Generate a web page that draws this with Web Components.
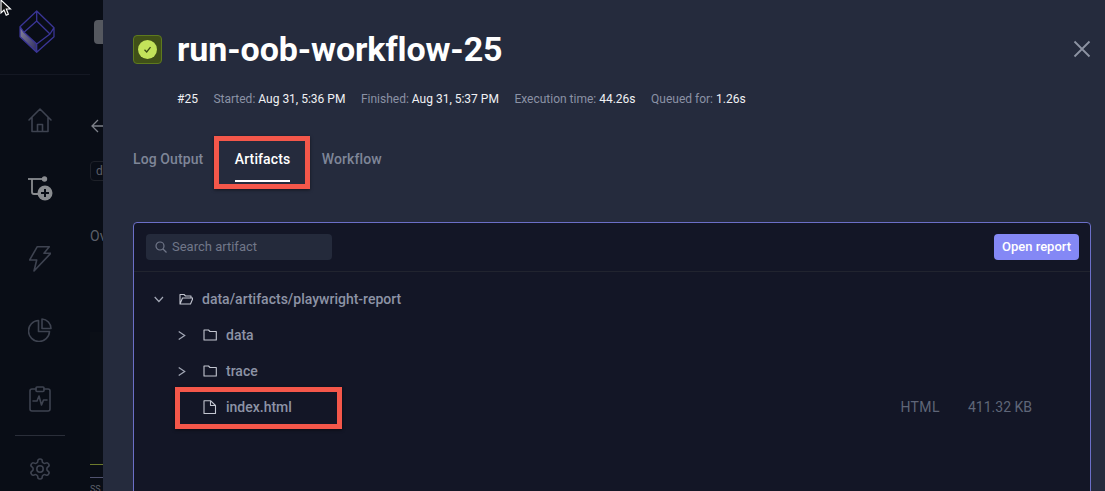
<!DOCTYPE html>
<html><head><meta charset="utf-8"><title>run-oob-workflow-25</title>
<style>
html,body{margin:0;padding:0;height:491px;overflow:hidden;background:#090d16}
body{font-family:Roboto,"Liberation Sans",sans-serif}
</style></head><body>
<app-shell>
  <app-sidebar slot="nav"></app-sidebar>
  <behind-page slot="behind"></behind-page>
  <run-drawer slot="drawer">
    <run-header title-text="run-oob-workflow-25"></run-header>
    <run-meta></run-meta>
    <run-tabs></run-tabs>
    <artifact-panel>
      <tree-row level="0" kind="open" label="data/artifacts/playwright-report"></tree-row>
      <tree-row level="1" kind="closed" label="data"></tree-row>
      <tree-row level="1" kind="closed" label="trace"></tree-row>
      <tree-row level="1" kind="file" label="index.html" type="HTML" size="411.32 KB" mark></tree-row>
    </artifact-panel>
  </run-drawer>
</app-shell>
<script>
function def(name, html){
  customElements.define(name, class extends HTMLElement{
    connectedCallback(){
      if(this.shadowRoot) return;
      const s=this.attachShadow({mode:'open'});
      s.innerHTML=typeof html==='function'?html(this):html;
    }
  });
}
def('app-shell',`<style>
:host{display:flex;width:1105px;height:491px;overflow:hidden;position:relative}
.cursor{position:absolute;left:0;top:-1px;width:12px;height:18px;z-index:9}
</style>
<slot name="nav"></slot><slot name="behind"></slot><slot name="drawer"></slot>
<svg class="cursor" viewBox="0 0 12 18"><path d="M1 1v13l3-3 2.200 5.200 2.200-1L6.300 10H10.500Z" fill="#111" stroke="#fff" stroke-width="1.100"/></svg>`);

def('app-sidebar',`<style>
:host{display:flex;flex-direction:column;align-items:center;flex:none;width:80px;background:#090d16;box-sizing:border-box;margin-right:10px;position:relative}
.logo{width:80px;height:74px;flex:none;display:flex;justify-content:flex-start;padding:10px 0 0 19px;box-sizing:border-box}
.rule{position:absolute;left:0;top:74px;width:103px;height:1px;background:#141823}
nav{display:flex;flex-direction:column;align-items:center;width:100%}
.i{display:flex;align-items:center;justify-content:center;width:100%}
svg.n{fill:none;stroke:#3e4350;stroke-width:1.600;stroke-linecap:round;stroke-linejoin:round}
hr{width:50px;height:1px;border:0;background:#2a2e39;margin:0;flex:none}
</style>
<div class="logo"><svg width="36" height="44" viewBox="0 0 36 44">
<defs><linearGradient id="g" x1="0" y1="0" x2="1" y2=".6"><stop offset="0" stop-color="#85839c"/><stop offset="1" stop-color="#3b3968"/></linearGradient></defs>
<path d="M1 17 5 22.300 17.700 34V42.300L1 26.700Z" fill="url(#g)"/>
<path d="M17.700 1 35 17.700V26.700L17.700 42.300 1 26.700V16.700ZM17.700 1V11M17.700 11 31 24 17.700 34 5 22.300ZM31 24 35 17.700M17.700 34V42.300M5 22.300 1 16.700" fill="none" stroke="#3a3596" stroke-width="1.300" stroke-linejoin="round"/>
</svg></div><div class="rule"></div>
<nav>
<div class="i" style="height:92px"><svg class="n" width="26" height="26" viewBox="0 0 26 26"><path d="M2 13 13 2 24 13M5 10.500V24.500H21V10.500M10.500 24.500V17.500H15.500V24.500"/></svg></div>
<div class="i" style="height:45px"><svg width="26" height="26" viewBox="0 0 26 26"><path d="M1 3h15" stroke="#8a8c90" stroke-width="1.800" fill="none"/><circle cx="17.500" cy="3" r="2.700" fill="#8a8c90"/><path d="M5 3v13q0 2 2 2h6" stroke="#8a8c90" stroke-width="1.800" fill="none"/><circle cx="18" cy="17" r="7.500" fill="#8a8c90"/><path d="M18 13v8M14 17h8" stroke="#090d16" stroke-width="2"/></svg></div>
<div class="i" style="height:92px"><svg class="n" width="22" height="30" viewBox="0 0 22 30"><path d="M8.300 4.700H20.300L15 11.300H21.700L5 29 7.700 18H.6Z"/></svg></div>
<div class="i" style="height:54px"><svg class="n" width="24" height="24" viewBox="0 0 24 24"><path d="M10.500 2.500a10.500 10.500 0 1 0 11 11H10.500Z"/><path d="M14 1a9.500 9.500 0 0 1 9 9.500H14Z"/></svg></div>
<div class="i" style="height:72px;padding-top:6px"><svg class="n" width="22" height="26" viewBox="0 0 22 26"><path d="M7 3H3q-2 0-2 2v18q0 2 2 2h16q2 0 2-2V5q0-2-2-2h-4"/><rect x="7" y="1" width="8" height="4.500" rx="1"/><path d="M4 15h4l2-5 2.500 9 2-5H18"/></svg></div>
<hr>
<div class="i" style="height:66px"><svg class="n" width="24" height="24" viewBox="0 0 24 24"><path d="M12.220 2h-.44a2 2 0 0 0-2 2v.18a2 2 0 0 1-1 1.730l-.43.25a2 2 0 0 1-2 0l-.15-.08a2 2 0 0 0-2.730.73l-.22.38a2 2 0 0 0 .73 2.730l.15.1a2 2 0 0 1 1 1.720v.51a2 2 0 0 1-1 1.740l-.15.09a2 2 0 0 0-.73 2.730l.22.38a2 2 0 0 0 2.730.73l.15-.08a2 2 0 0 1 2 0l.43.25a2 2 0 0 1 1 1.730V20a2 2 0 0 0 2 2h.44a2 2 0 0 0 2-2v-.18a2 2 0 0 1 1-1.730l.43-.25a2 2 0 0 1 2 0l.15.08a2 2 0 0 0 2.730-.73l.22-.39a2 2 0 0 0-.73-2.730l-.15-.08a2 2 0 0 1-1-1.740v-.5a2 2 0 0 1 1-1.740l.15-.09a2 2 0 0 0 .73-2.730l-.22-.38a2 2 0 0 0-2.730-.73l-.15.08a2 2 0 0 1-2 0l-.43-.25a2 2 0 0 1-1-1.730V4a2 2 0 0 0-2-2z"/><circle cx="12" cy="12" r="3.200"/></svg></div>
</nav>`);

def('behind-page',`<style>
:host{display:flex;flex-direction:column;flex:none;width:13px;overflow:hidden;background:#090d16;color:#5b5f69;font-size:14px;position:relative}
.tag{width:20px;height:24px;background:#55585f;border-radius:4px;margin:20px 0 0 4px;flex:none}
svg{display:block;margin:75px 0 0 1px;flex:none}
.chip{width:30px;height:20px;box-sizing:border-box;border:1px solid #1e2129;border-radius:4px;margin-top:28px;padding-left:5px;line-height:18px;font-size:12px;flex:none}
.ov{margin-top:47px;line-height:16px;font-size:14px;flex:none}
.chart{margin-top:88px;width:30px;height:133px;background:#0b0f17;border-bottom:1px solid #6d7a2c;flex:none;box-sizing:border-box}
.ln{height:1px;background:#50526f;margin-top:12px;flex:none}
.bot{font-size:9px;line-height:10px;flex:none;margin-top:6px}
</style>
<div class="tag"></div>
<svg width="14" height="14" viewBox="0 0 14 14" fill="none" stroke="#7d818a" stroke-width="1.300"><path d="M7 1 1 7l6 6M1 7h13"/></svg>
<div class="chip">d</div>
<div class="ov">Ov</div>
<div class="chart"></div>
<div class="ln"></div><div class="bot">SS</div>`);

def('run-drawer',`<style>
:host{display:block;flex:1;min-width:0;background:#252b3d;padding:0 14px 0 30px;box-sizing:border-box;height:491px;overflow:hidden;box-shadow:-2px 0 3px rgba(0,0,0,.3)}
</style><slot></slot>`);

def('run-header',h=>`<style>
:host{display:flex;align-items:center;height:98px;box-sizing:border-box;position:relative}
.b{width:29px;height:29px;box-sizing:border-box;background:#405018;border:1px solid #5e7a1d;border-radius:4px;display:flex;align-items:center;justify-content:center;flex:none;margin-right:15px}
.c{width:19px;height:19px;border-radius:50%;background:#c3e35a;display:flex;align-items:center;justify-content:center}
h1{margin:0;font:700 34px/40px Roboto,sans-serif;color:#fff;letter-spacing:-.1px}
button{position:absolute;right:0;top:40px;width:18px;height:18px;padding:0;border:0;background:none}
</style><div class="b"><div class="c"><svg width="11" height="11" viewBox="0 0 11 11" fill="none" stroke="#3d4d14" stroke-width="1.300"><path d="M2.500 5.800 4.700 8 8.500 3.200"/></svg></div></div>
<h1>${h.getAttribute('title-text')}</h1>
<button aria-label="Close"><svg width="18" height="18" viewBox="0 0 18 18" stroke="#8d93a3" stroke-width="1.800" fill="none" style="display:block"><path d="M1.500 1.500 16.500 16.500M16.500 1.500 1.500 16.500"/></svg></button>`);

def('run-meta',`<style>
:host{display:flex;gap:15.500px;padding-left:44px;height:16px;align-items:center;font:400 12px/16px Roboto,sans-serif;color:#8b92a5;white-space:nowrap;margin-top:-7px}
b{font-weight:400;color:#f0f1f4}
</style><span><b>#25</b></span><span>Started: <b>Aug 31, 5:36 PM</b></span><span>Finished: <b>Aug 31, 5:37 PM</b></span><span>Execution time: <b>44.26s</b></span><span>Queued for: <b>1.26s</b></span>`);

def('run-tabs',`<style>
:host{display:flex;gap:31.500px;margin-top:34px;height:40px;font:500 14px/20px Roboto,sans-serif;letter-spacing:.1px;color:#7f8698;position:relative;margin-bottom:41px}
div{height:40px;box-sizing:border-box;padding-top:8px}
.on{color:#fff;position:relative}
.on::after{content:"";position:absolute;left:0;right:0;top:39px;height:2px;background:#fff}
.mark{position:absolute;left:81px;top:-5px;width:96px;height:53px;box-sizing:border-box;border:5px solid #f4574a;box-shadow:0 1px 3px rgba(0,0,0,.5);pointer-events:none}
</style><div>Log Output</div><div class="on">Artifacts</div><div>Workflow</div><span class="mark"></span>`);

def('artifact-panel',`<style>
:host{display:block;background:#131626;border:1px solid #6b6fc7;border-radius:4px 4px 0 0;height:300px;box-sizing:border-box}
.bar{display:flex;justify-content:space-between;align-items:center;height:48px;padding:0 11px 0 12px;border-bottom:1px solid #21242f}
.search{width:186px;height:26px;background:#242a3b;border-radius:4px;display:flex;align-items:center;gap:5px;padding-left:9px;box-sizing:border-box;color:#717789;font:400 13px/26px Roboto,sans-serif}
button{width:85px;height:26px;padding:0;border:0;border-radius:4px;background:#8488f5;color:#fff;font:500 13px/26px Roboto,sans-serif}
.tree{padding-top:9px;display:flex;flex-direction:column}
</style>
<div class="bar"><div class="search"><svg width="12" height="12" viewBox="0 0 12 12" fill="none" stroke="#717789" stroke-width="1.200"><circle cx="5" cy="5" r="4"/><path d="m8 8 3.500 3.500"/></svg><span>Search artifact</span></div><button>Open report</button></div>
<div class="tree"><slot></slot></div>`);

def('tree-row',h=>{
 const lv=+h.getAttribute('level'),k=h.getAttribute('kind');
 const chev=k==='open'?'<path d="M1.700 3 5.900 7.500 10 3"/>':k==='closed'?'<path d="M1.700 1.500 7.700 5.500 1.700 9.500"/>':'';
 const ic=k==='open'?'<path d="M2 12V2.500H6L7.500 4H13V6M2 12 4.500 6H15L12.500 12Z"/>':k==='closed'?'<path d="M2 2H6.500L8 3.500H14.300V12H2Z"/>':'<path d="M2 .7H8.500L13.500 5.500V13.500H2ZM8.500 .7V5.500H13.500"/>';
 return `<style>
:host{display:flex;align-items:center;height:36px;font:500 14px/36px Roboto,sans-serif;color:#8d93a5;padding-left:${19+lv*24}px;position:relative}
.ch{width:11px;height:11px;flex:none;margin-right:14px;display:block}
.ic{width:15px;height:14px;flex:none;margin-right:9px;display:block}
.end{margin-left:auto;display:flex;gap:28px;font-weight:400;color:#5f6678;padding-right:58px;font-size:14px}
.end span:first-child{letter-spacing:.03em}
.mark{position:absolute;left:41px;top:-2px;width:167px;height:42px;box-sizing:border-box;border:5px solid #f4574a;box-shadow:0 1px 3px rgba(0,0,0,.5)}
</style>
<svg class="ch" viewBox="0 0 11 11" fill="none" stroke="#a3a8b6" stroke-width="1.200">${chev}</svg>
<svg class="ic" viewBox="0 0 15 14" fill="none" stroke="#c3c6d0" stroke-width="1.100" stroke-linejoin="round">${ic}</svg>
<span>${h.getAttribute('label')}</span>
${h.hasAttribute('type')?`<span class="end"><span>${h.getAttribute('type')}</span><span>${h.getAttribute('size')}</span></span>`:''}
${h.hasAttribute('mark')?'<span class="mark"></span>':''}`;
});
</script>
</body></html>
